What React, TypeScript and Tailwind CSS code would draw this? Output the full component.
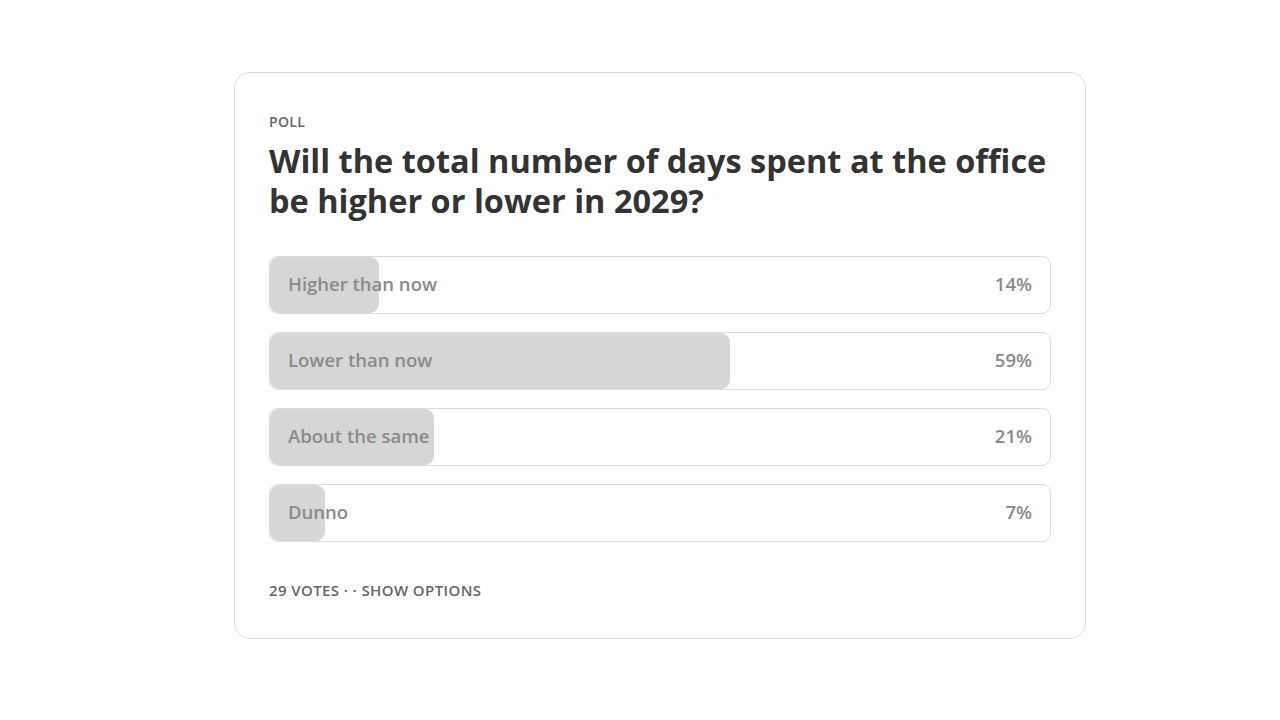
const options = [
  { label: 'Higher than now', pct: 14 },
  { label: 'Lower than now', pct: 59 },
  { label: 'About the same', pct: 21 },
  { label: 'Dunno', pct: 7 },
];

const PollOption = ({ label, pct }: { label: string; pct: number }) => (
  <div className="relative h-[58px] rounded-[9px] border border-[#dcdcdc] bg-white overflow-hidden">
    <div
      className="absolute left-0 top-0 bottom-0 rounded-[9px] bg-[#d6d6d6]"
      style={{ width: `${pct}%` }}
    />
    <div className="relative flex h-full items-center justify-between px-[18px] pb-[2px] text-[18.5px] font-semibold text-[#8a8a8a]">
      <span>{label}</span>
      <span>{pct}%</span>
    </div>
  </div>
);

export default function App() {
  return (
    <div
      className="min-h-[720px] w-full bg-white pt-[72px]"
      style={{ fontFamily: '"Open Sans", Lato, sans-serif' }}
    >
      <div className="ml-[234px] w-[852px] rounded-[16px] border border-[#dadada] bg-white px-[34px] pt-[40px] pb-[36px]">
        <div className="text-[14px] font-semibold uppercase tracking-[0.3px] text-[#666] leading-[18px]">Poll</div>
        <h1 className="mt-[10px] text-[32.5px] font-bold leading-[40px] text-[#333]">
          Will the total number of days spent at the office be higher or lower in 2029?
        </h1>
        <div className="mt-[35px] flex flex-col gap-[18px]">
          {options.map((o) => (
            <PollOption key={o.label} {...o} />
          ))}
        </div>
        <div className="mt-[37px] text-[15px] font-semibold uppercase tracking-[0.4px] text-[#666]">
          29 votes · · Show options
        </div>
      </div>
    </div>
  );
}
